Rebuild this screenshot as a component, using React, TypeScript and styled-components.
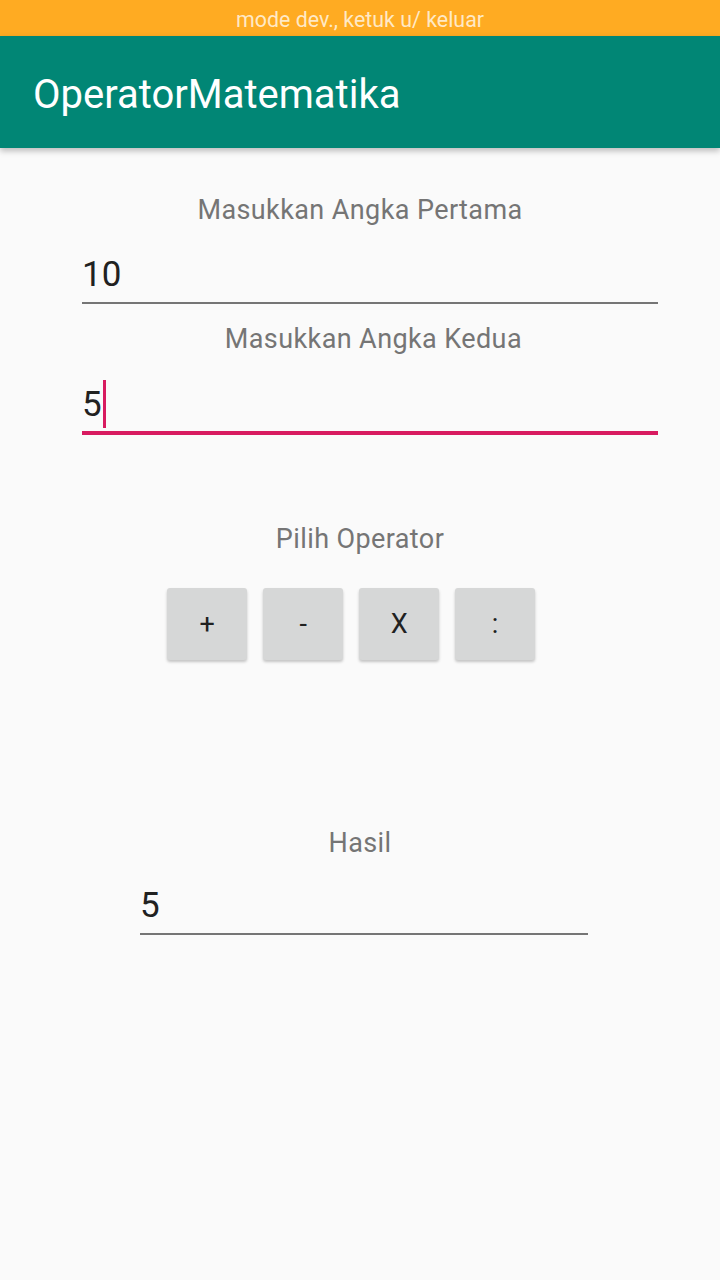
import React from "react";
import styled, { createGlobalStyle } from "styled-components";

const GlobalStyle = createGlobalStyle`
  html, body {
    margin: 0;
    padding: 0;
    background: #fafafa;
    font-family: Roboto, "Noto Sans", sans-serif;
  }
`;

const Screen = styled.div`
  width: 720px;
  height: 1280px;
  display: flex;
  flex-direction: column;
  background: #fafafa;
  overflow: hidden;
`;

const StatusBar = styled.div`
  height: 36px;
  box-sizing: border-box;
  padding-top: 2px;
  background: #ffab22;
  color: #ffe9c6;
  font-size: 21.4px;
  display: flex;
  align-items: center;
  justify-content: center;
`;

const AppBar = styled.header`
  height: 112px;
  box-sizing: border-box;
  padding: 4px 0 0 33px;
  background: #018675;
  display: flex;
  align-items: center;
  box-shadow: 0 3px 6px rgba(0, 0, 0, 0.25);
  position: relative;
  z-index: 1;
`;

const Title = styled.h1`
  margin: 0;
  font-size: 40px;
  font-weight: 400;
  color: #ffffff;
`;

const Content = styled.main`
  display: flex;
  flex-direction: column;
  align-items: flex-start;
  padding-top: 47px;
`;

const Label = styled.div<{ $indent?: number; $width?: number; $top?: number }>`
  align-self: ${(p) => (p.$indent === undefined ? "center" : "flex-start")};
  margin-left: ${(p) => p.$indent ?? 0}px;
  margin-top: ${(p) => p.$top ?? 0}px;
  width: ${(p) => (p.$width ? `${p.$width}px` : "auto")};
  text-align: right;
  font-size: 27px;
  letter-spacing: 0.4px;
  line-height: 30px;
  color: #757575;
`;

const Field = styled.div<{ $indent: number; $width: number; $top: number; $focused?: boolean }>`
  margin-left: ${(p) => p.$indent}px;
  margin-top: ${(p) => p.$top}px;
  width: ${(p) => p.$width}px;
  height: 58px;
  display: flex;
  align-items: center;
  font-size: 35px;
  color: #212121;
  border-bottom: ${(p) => (p.$focused ? "4px solid #d81b60" : "2px solid #757575")};
  box-sizing: border-box;
`;

const Cursor = styled.span`
  display: inline-block;
  width: 3px;
  height: 48px;
  background: #d81b60;
  margin-left: 1px;
`;

const ButtonRow = styled.div`
  display: flex;
  gap: 15.7px;
  margin-top: 34px;
  margin-left: 167px;
`;

const OpButton = styled.button`
  width: 80.3px;
  height: 72px;
  border: none;
  border-radius: 3px;
  background: #d6d7d7;
  box-shadow: 0 2px 3px rgba(0, 0, 0, 0.22);
  font-family: Roboto, sans-serif;
  font-size: 27px;
  color: #212121;
  padding: 0;
`;

export default function App() {
  return (
    <>
      <GlobalStyle />
      <Screen>
        <StatusBar>mode dev., ketuk u/ keluar</StatusBar>
        <AppBar>
          <Title>OperatorMatematika</Title>
        </AppBar>
        <Content>
          <Label>Masukkan Angka Pertama</Label>
          <Field $indent={82} $width={576} $top={21}>10</Field>
          <Label $indent={198} $width={324} $top={20}>
            Masukkan Angka Kedua
          </Label>
          <Field $indent={82} $width={576} $top={23} $focused>
            5<Cursor />
          </Field>
          <Label $top={89}>Pilih Operator</Label>
          <ButtonRow>
            <OpButton>+</OpButton>
            <OpButton>-</OpButton>
            <OpButton>X</OpButton>
            <OpButton>:</OpButton>
          </ButtonRow>
          <Label $top={168}>Hasil</Label>
          <Field $indent={140} $width={448} $top={19}>5</Field>
        </Content>
      </Screen>
    </>
  );
}
